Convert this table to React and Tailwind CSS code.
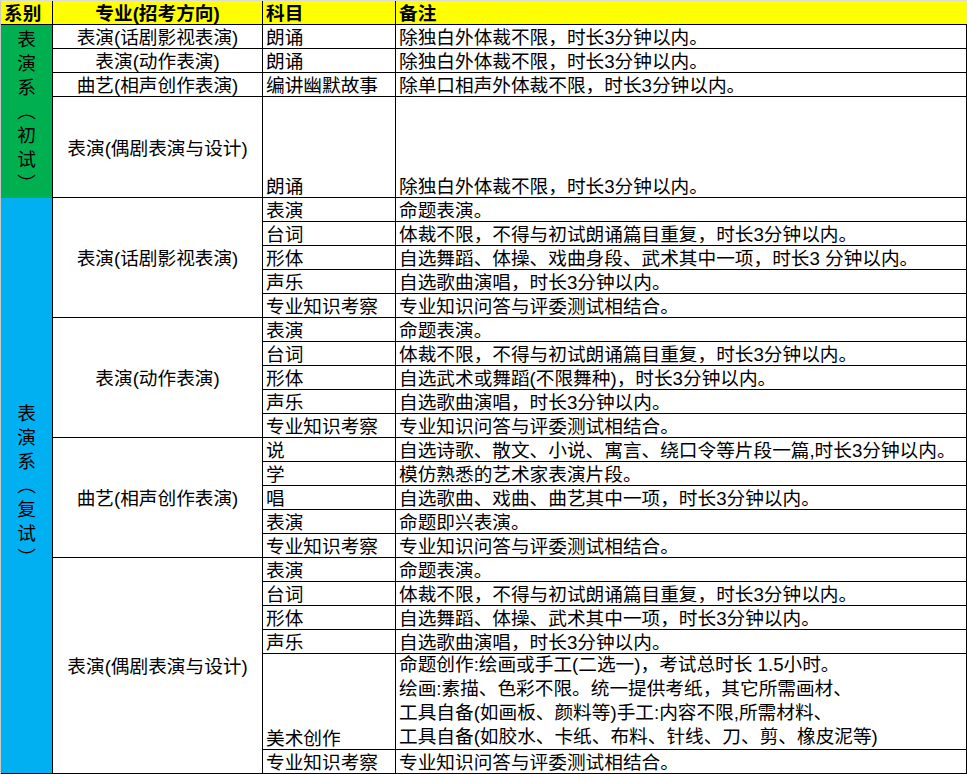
import React from "react";

const chushi = [
  { major: "表演(话剧影视表演)", rows: [{ s: "朗诵", n: ["除独白外体裁不限，时长3分钟以内。"], h: "h-[24px]" }] },
  { major: "表演(动作表演)", rows: [{ s: "朗诵", n: ["除独白外体裁不限，时长3分钟以内。"], h: "h-[24px]" }] },
  { major: "曲艺(相声创作表演)", rows: [{ s: "编讲幽默故事", n: ["除单口相声外体裁不限，时长3分钟以内。"], h: "h-[24px]" }] },
  { major: "表演(偶剧表演与设计)", rows: [{ s: "朗诵", n: ["除独白外体裁不限，时长3分钟以内。"], h: "h-[101px]" }] },
];

const R = (s, t) => ({ s, n: [t], h: "h-[24px]" });

const fushi = [
  {
    major: "表演(话剧影视表演)",
    rows: [
      R("表演", "命题表演。"),
      R("台词", "体裁不限，不得与初试朗诵篇目重复，时长3分钟以内。"),
      R("形体", "自选舞蹈、体操、戏曲身段、武术其中一项，时长3 分钟以内。"),
      R("声乐", "自选歌曲演唱，时长3分钟以内。"),
      R("专业知识考察", "专业知识问答与评委测试相结合。"),
    ],
  },
  {
    major: "表演(动作表演)",
    rows: [
      R("表演", "命题表演。"),
      R("台词", "体裁不限，不得与初试朗诵篇目重复，时长3分钟以内。"),
      R("形体", "自选武术或舞蹈(不限舞种)，时长3分钟以内。"),
      R("声乐", "自选歌曲演唱，时长3分钟以内。"),
      R("专业知识考察", "专业知识问答与评委测试相结合。"),
    ],
  },
  {
    major: "曲艺(相声创作表演)",
    rows: [
      R("说", "自选诗歌、散文、小说、寓言、绕口令等片段一篇,时长3分钟以内。"),
      R("学", "模仿熟悉的艺术家表演片段。"),
      R("唱", "自选歌曲、戏曲、曲艺其中一项，时长3分钟以内。"),
      R("表演", "命题即兴表演。"),
      R("专业知识考察", "专业知识问答与评委测试相结合。"),
    ],
  },
  {
    major: "表演(偶剧表演与设计)",
    rows: [
      R("表演", "命题表演。"),
      R("台词", "体裁不限，不得与初试朗诵篇目重复，时长3分钟以内。"),
      R("形体", "自选舞蹈、体操、武术其中一项，时长3分钟以内。"),
      R("声乐", "自选歌曲演唱，时长3分钟以内。"),
      {
        s: "美术创作",
        n: [
          "命题创作:绘画或手工(二选一)，考试总时长 1.5小时。",
          "绘画:素描、色彩不限。统一提供考纸，其它所需画材、",
          "工具自备(如画板、颜料等)手工:内容不限,所需材料、",
          "工具自备(如胶水、卡纸、布料、针线、刀、剪、橡皮泥等)",
        ],
        h: "h-[96px]",
      },
      R("专业知识考察", "专业知识问答与评委测试相结合。"),
    ],
  },
];

function Row({ r }) {
  return (
    <div className={`flex ${r.h} border-b border-black`}>
      <div className="w-[133px] shrink-0 border-r border-black flex items-end pl-[3px] whitespace-nowrap overflow-hidden">
        <span className="leading-[21px]">{r.s}</span>
      </div>
      <div className="w-[571px] shrink-0 border-r border-black flex flex-col justify-end pl-[3px] whitespace-nowrap overflow-hidden">
        {r.n.map((t, i) => (
          <div key={i} className={r.n.length > 1 ? "leading-[24px] h-[24px] shrink-0" : "leading-[21px]"}>
            {t}
          </div>
        ))}
      </div>
    </div>
  );
}

function Group({ g }) {
  return (
    <div className="flex">
      <div className="w-[210px] shrink-0 border-r border-b border-black flex items-center justify-center pt-[2px] whitespace-nowrap">
        <span className="leading-[21px]">{g.major}</span>
      </div>
      <div className="flex flex-col w-[704px] shrink-0">
        {g.rows.map((r, i) => (
          <Row key={i} r={r} />
        ))}
      </div>
    </div>
  );
}

function VText({ chars }) {
  return (
    <div className="flex flex-col items-center">
      {chars.map((c, i) => (
        <div key={i} className="h-[24px] leading-[24px] text-center">
          {c}
        </div>
      ))}
    </div>
  );
}

export default function App() {
  return (
    <div className="w-[967px] h-[774px] bg-white overflow-hidden">
      <div className="w-[967px] border-l border-t border-l-[#c8c8c8] border-t-[#dcdcdc] text-black text-[18.67px] font-['Liberation_Sans','Noto_Sans_CJK_SC',sans-serif]">
        {/* header */}
        <div className="flex h-[24px] bg-[#ffff00] border-b border-black font-bold whitespace-nowrap">
          <div className="w-[52px] shrink-0 border-r border-black pl-[3px] flex items-end leading-[21px]">系别</div>
          <div className="w-[210px] shrink-0 border-r border-black flex items-end justify-center leading-[21px]">专业(招考方向)</div>
          <div className="w-[133px] shrink-0 border-r border-black pl-[3px] flex items-end leading-[21px]">科目</div>
          <div className="flex-1 pl-[3px] flex items-end leading-[21px]">备注</div>
        </div>
        {/* 初试 */}
        <div className="flex">
          <div className="w-[52px] shrink-0 bg-[#00b050] border-r border-black flex items-center justify-center">
            <VText chars={["表", "演", "系", "︵", "初", "试", "︶"]} />
          </div>
          <div className="flex flex-col">
            {chushi.map((g, i) => (
              <Group key={i} g={g} />
            ))}
          </div>
        </div>
        {/* 复试 */}
        <div className="flex">
          <div className="w-[52px] shrink-0 bg-[#00b0f0] border-r border-b border-black flex items-center justify-center">
            <VText chars={["表", "演", "系", "︵", "复", "试", "︶"]} />
          </div>
          <div className="flex flex-col">
            {fushi.map((g, i) => (
              <Group key={i} g={g} />
            ))}
          </div>
        </div>
      </div>
    </div>
  );
}
